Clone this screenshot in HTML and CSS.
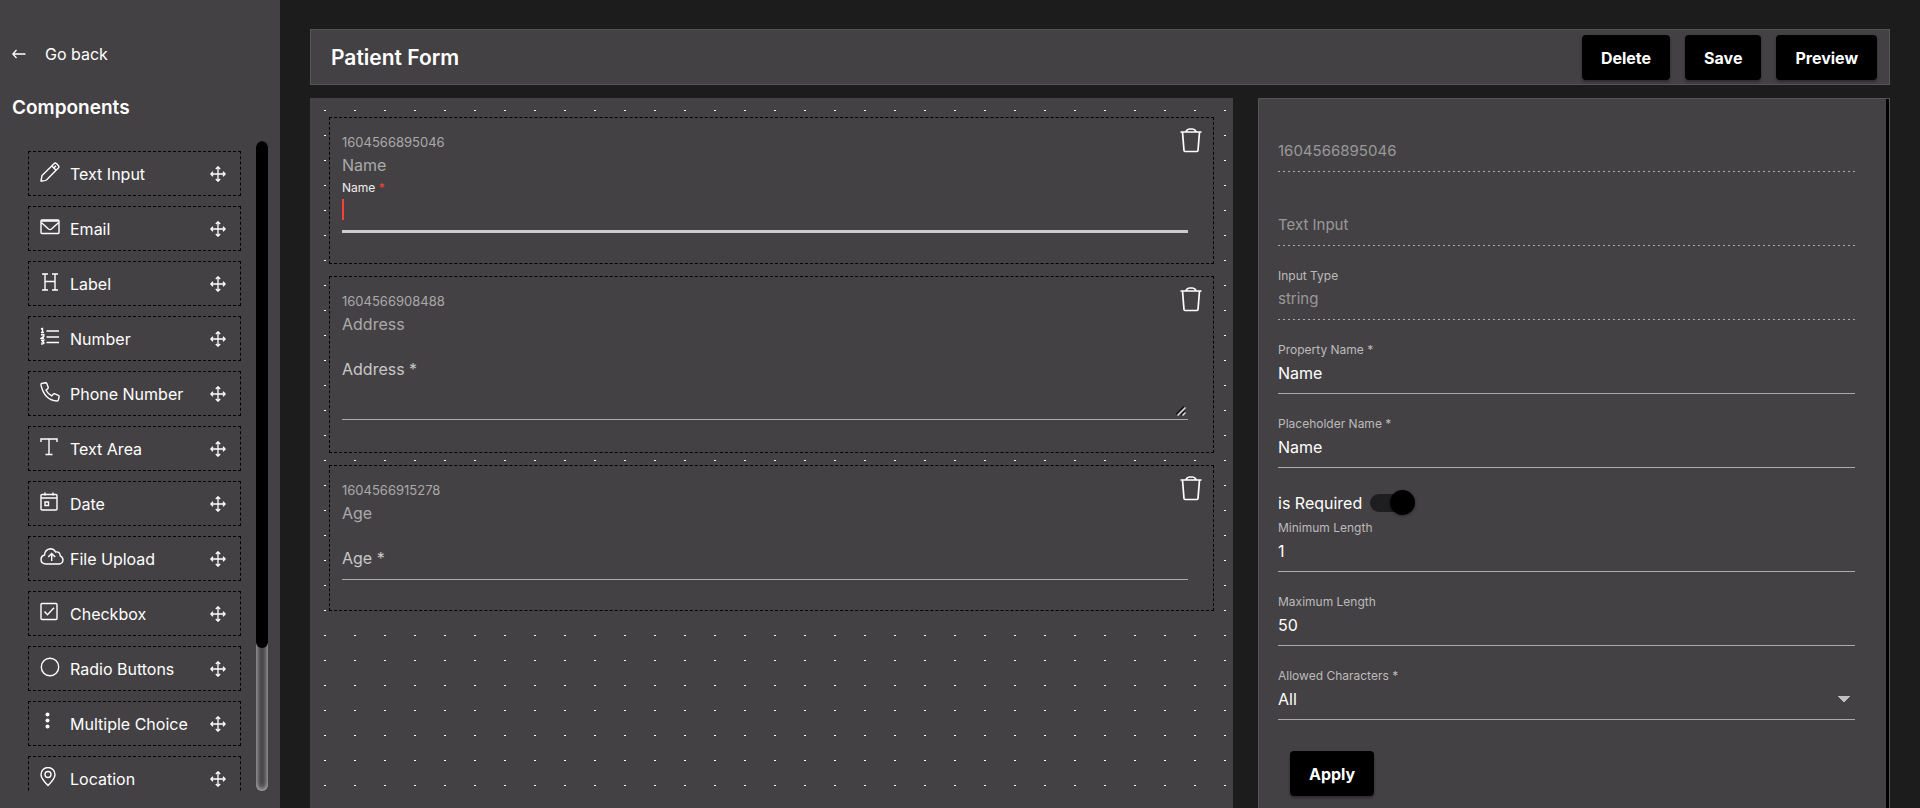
FILE: index.html
```html
<!DOCTYPE html>
<html lang="en">
<head>
<meta charset="utf-8">
<meta name="viewport" content="width=device-width, initial-scale=1">
<title>Patient Form</title>
<link rel="stylesheet" href="styles.css">
</head>
<body>
<svg class="sprite" aria-hidden="true">
  <symbol id="move" viewBox="0 0 16 16"><path d="M8 .8v14.4M.8 8h14.4M5.8 3 8 .8 10.200 3M5.800 13 8 15.200 10.200 13M3 5.800.8 8 3 10.200M13 5.800 15.200 8 13 10.200"/></symbol>
  <symbol id="trash" viewBox="0 0 22 26"><path d="M.5 5h21M6 4.500C7 2.500 8 2 9.500 2h3c1.500 0 2.500.5 3.500 2.500M2.500 5l1.500 18.500q.1 1 1 1h12q.9 0 1-1L19.500 5"/></symbol>
</svg>
<div class="app">
  <aside class="sidebar">
    <a class="back" href="#">
      <svg class="back-icon" viewBox="0 0 14 10"><path d="M13.500 5H1M4.500 1 .8 5l3.700 4"/></svg>
      Go back
    </a>
    <h2 class="sidebar-title">Components</h2>
    <div class="scroller">
      <ul class="components">
        <li class="component"><svg class="icon" viewBox="0 0 20 20"><path d="M1 19l1-5.500L14 1.700q1.200-1.200 2.600 0l1.700 1.700q1.200 1.300 0 2.600L6.500 18Q4 19.300 1 19zM11.800 4l4.300 4.300M13.300 6.500 16 3.700"/></svg><span>Text Input</span><svg class="move"><use href="#move"/></svg></li>
        <li class="component"><svg class="icon" viewBox="0 0 20 20"><rect x="1" y="3" width="18" height="13.500" rx="1"/><path d="M1.300 5.500 8.500 12q1.500 1.200 3 0l7.200-6.500M1.500 4h17"/></svg><span>Email</span><svg class="move"><use href="#move"/></svg></li>
        <li class="component"><svg class="icon" viewBox="0 0 20 20"><path d="M5 2v16M15 2v16M5 9.500h10M2 2h6M12 2h6M2 18h6M12 18h6"/></svg><span>Label</span><svg class="move"><use href="#move"/></svg></li>
        <li class="component"><svg class="icon" viewBox="0 0 20 20"><path d="M6.500 4H19M6.500 10H19M6.500 15.500H19M1 2l1.500-.5v4M1 5.500h3M1 7.800h2.800v1.500L1 11.300h3M1 13.300h2.800L2.500 15q1.500 0 1.500 1t-3 1"/></svg><span>Number</span><svg class="move"><use href="#move"/></svg></li>
        <li class="component"><svg class="icon" viewBox="0 0 20 20"><path d="M1.500 1.500 5.500.8q1 0 1.300.8L8.200 5.200q.1 1-.5 1.500L6 8.200q1.800 3.500 5.800 5.700l1.600-1.800q.6-.6 1.500-.3l3.500 1.500q.9.400.7 1.300l-.8 3.500q-.2.900-1.200.9Q4.500 18.500 1 3.200q-.2-1.400.5-1.700z"/></svg><span>Phone Number</span><svg class="move"><use href="#move"/></svg></li>
        <li class="component"><svg class="icon" viewBox="0 0 20 20"><path d="M1 5V2h16v3M9 2v15.500M5.500 17.500h7"/></svg><span>Text Area</span><svg class="move"><use href="#move"/></svg></li>
        <li class="component"><svg class="icon" viewBox="0 0 20 20"><rect x="1" y="2.500" width="16" height="15.500" rx="1"/><path d="M1 6h16M5 .5v3M13 .5v3M5 10h3.500v3.500H5z"/></svg><span>Date</span><svg class="move"><use href="#move"/></svg></li>
        <li class="component"><svg class="icon icon-wide" viewBox="0 0 24 20"><path d="M6 17q-5-.3-5-4.500Q1 9 4.500 8q.5-5.800 6-6.300 3.500 0 5 3.300 4.500-.7 4.700 3.800Q23 10 23 13q-.3 3.700-4 4zM11.700 14V6.500M8.200 10l3.500-3.500 3.500 3.500"/></svg><span>File Upload</span><svg class="move"><use href="#move"/></svg></li>
        <li class="component"><svg class="icon" viewBox="0 0 20 20"><rect x="1" y="1.500" width="16" height="16" rx="1"/><path d="m4.500 9.500 3 3.300 6.500-7"/></svg><span>Checkbox</span><svg class="move"><use href="#move"/></svg></li>
        <li class="component"><svg class="icon" viewBox="0 0 20 20"><circle cx="10" cy="10" r="8.700"/></svg><span>Radio Buttons</span><svg class="move"><use href="#move"/></svg></li>
        <li class="component"><svg class="icon icon-dots" viewBox="0 0 20 20"><circle cx="7.500" cy="2.500" r="2"/><circle cx="7.500" cy="8.500" r="2"/><circle cx="7.500" cy="14.500" r="2"/></svg><span>Multiple Choice</span><svg class="move"><use href="#move"/></svg></li>
        <li class="component"><svg class="icon" viewBox="0 0 20 20"><path d="M8 18.500Q1 11.500 1 7.500a7 7 0 0 1 14 0q0 4-7 11z"/><circle cx="8" cy="7.500" r="3"/></svg><span>Location</span><svg class="move"><use href="#move"/></svg></li>
      </ul>
      <div class="track"><div class="thumb"></div></div>
    </div>
  </aside>

  <main class="main">
    <header class="topbar">
      <h1 class="title">Patient Form</h1>
      <div class="actions">
        <button class="btn" type="button">Delete</button>
        <button class="btn" type="button">Save</button>
        <button class="btn" type="button">Preview</button>
      </div>
    </header>

    <div class="workspace">
      <section class="canvas">
        <article class="card">
          <div class="card-id">1604566895046</div>
          <div class="card-name">Name</div>
          <label class="card-label" for="f-name">Name <span class="star">*</span></label>
          <div class="active-box"><input class="card-input active" id="f-name" type="text"><span class="cursor"></span></div>
          <button class="trash" type="button" aria-label="Remove Name"><svg><use href="#trash"/></svg></button>
        </article>
        <article class="card card-tall">
          <div class="card-id">1604566908488</div>
          <div class="card-name">Address</div>
          <label class="card-label" for="f-address"></label>
          <div class="area-box">
            <textarea class="card-input card-area" id="f-address" placeholder="Address *"></textarea>
            <svg class="grip" viewBox="0 0 10 10"><path class="grip-dark" d="M0 8.500 8 .5M5 9 9 5"/><path class="grip-light" d="M1.500 9.500 9.500 1.500M6.500 9.500l3-3"/></svg>
          </div>
          <button class="trash" type="button" aria-label="Remove Address"><svg><use href="#trash"/></svg></button>
        </article>
        <article class="card">
          <div class="card-id">1604566915278</div>
          <div class="card-name">Age</div>
          <label class="card-label" for="f-age"></label>
          <input class="card-input" id="f-age" type="text" placeholder="Age *">
          <button class="trash" type="button" aria-label="Remove Age"><svg><use href="#trash"/></svg></button>
        </article>
      </section>

      <section class="settings">
        <form class="form">
          <div class="field"><label class="label" for="s-id"></label><input class="value" id="s-id" value="1604566895046" disabled></div>
          <div class="field"><label class="label" for="s-kind"></label><input class="value" id="s-kind" value="Text Input" disabled></div>
          <div class="field"><label class="label" for="s-type">Input Type</label><input class="value" id="s-type" value="string" disabled></div>
          <div class="field"><label class="label" for="s-prop">Property Name *</label><input class="value" id="s-prop" value="Name"></div>
          <div class="field"><label class="label" for="s-place">Placeholder Name *</label><input class="value" id="s-place" value="Name"></div>
          <div class="field">
            <div class="switch-row"><label for="s-req">is Required</label><input class="switch" id="s-req" type="checkbox" checked></div>
            <label class="label" for="s-min">Minimum Length</label><input class="value" id="s-min" value="1">
          </div>
          <div class="field"><label class="label" for="s-max">Maximum Length</label><input class="value" id="s-max" value="50"></div>
          <div class="field"><label class="label" for="s-chars">Allowed Characters *</label><select class="value select" id="s-chars"><option>All</option></select></div>
          <button class="btn apply" type="button">Apply</button>
        </form>
        <div class="settings-bar"></div>
      </section>
    </div>
  </main>
</div>
</body>
</html>
```
FILE: styles.css
```css
* { box-sizing: border-box; }
body {
  margin: 0;
  background: #1c1c1c;
  color: #fff;
  font: 16px/24px Inter, "Liberation Sans", sans-serif;
}
button, input, select, textarea { font: inherit; color: inherit; }
svg { fill: none; stroke: currentColor; }
.sprite { display: none; }
.app { display: flex; height: 100vh; overflow: hidden; }

.sidebar {
  display: flex;
  flex-direction: column;
  flex: 0 0 280px;
  padding: 42px 12px 17px;
  background: #444144;
}
.back {
  display: flex;
  align-items: center;
  gap: 19px;
  color: #fff;
  text-decoration: none;
}
.back-icon { width: 14px; height: 10px; stroke-width: 1.300; }
.sidebar-title { margin: 30px 0 21px; font-size: 19px; line-height: 24px; font-weight: 600; }
.scroller { display: flex; flex: 1; min-height: 0; gap: 15px; }
.components {
  display: flex;
  flex: 1;
  flex-direction: column;
  gap: 10px;
  margin: 0;
  padding: 10px 0 0 16px;
  overflow: hidden;
  list-style: none;
}
.component {
  display: flex;
  flex: 0 0 45px;
  align-items: center;
  padding: 0 14px 0 11px;
  border: 1px dashed #000;
}
.component span { flex: 1; white-space: nowrap; }
.icon { width: 20px; height: 20px; margin: 0 10px 3px 0; stroke-width: 1.400; }
.icon-wide { width: 24px; margin-right: 6px; }
.icon-dots { fill: currentColor; stroke: none; }
.move { width: 16px; height: 16px; stroke-width: 1.300; }
.track {
  width: 12px;
  border-radius: 6px;
  background: #444144;
  box-shadow: inset 0 0 6px #ddd;
}
.thumb { height: 78%; border-radius: 6px; background: #000; }

.main {
  display: flex;
  flex: 1;
  flex-direction: column;
  gap: 13px;
  min-width: 0;
  padding: 29px 30px 0;
}
.topbar {
  display: flex;
  align-items: center;
  justify-content: space-between;
  padding: 5px 12px 4px 20px;
  border: 1px solid #555;
  background: #444144;
}
.title { margin: 0; font-size: 21px; line-height: 28px; font-weight: 600; }
.actions { display: flex; gap: 15px; }
.btn {
  height: 45px;
  padding: 0 19px;
  border: 0;
  border-radius: 4px;
  background: #000;
  box-shadow: 0 2px 3px rgba(0, 0, 0, .35);
  color: #fff;
  font-weight: 700;
}

.workspace { display: grid; flex: 1; grid-template-columns: 923fr 632fr; gap: 25px; min-height: 0; }
.canvas {
  display: flex;
  flex-direction: column;
  gap: 12px;
  padding: 19px;
  background: conic-gradient(at 2px 1px, transparent 270deg, #fff 0) 14px 12px / 30px 25px #444144;
}
.card {
  position: relative;
  display: flex;
  flex-direction: column;
  padding: 14px 25px 30px 12px;
  border: 1px dashed #000;
  background: #444144;
}
.card-tall { padding-bottom: 32px; }
.card-id { color: #aaa; font-size: 13px; line-height: 20px; }
.card-name { color: #aaa; line-height: 26px; }
.card-label { height: 20px; font-size: 12px; line-height: 20px; color: #eee; }
.star { color: #f44336; }
.card-input {
  width: 100%;
  height: 34px;
  padding: 0 0 9px;
  border: 0;
  border-bottom: 1px solid #aaa;
  border-radius: 0;
  outline: 0;
  background: transparent;
}
.card-input::placeholder { color: #c8c8c8; opacity: 1; }
.area-box { position: relative; display: flex; }
.card-area { height: 63px; resize: none; }
.grip { position: absolute; right: 2px; bottom: 4px; width: 10px; height: 10px; stroke-width: 1.500; }
.grip-dark { stroke: #111; }
.grip-light { stroke: #ddd; }
.active-box { position: relative; display: flex; }
.active { height: 35px; border-bottom: 3px solid #ccc; }
.cursor { position: absolute; top: 1px; left: 0; width: 2px; height: 21px; background: #f44336; }
.trash {
  position: absolute;
  top: 9px;
  right: 11px;
  display: flex;
  padding: 0;
  border: 0;
  background: none;
}
.trash svg { width: 22px; height: 26px; stroke-width: 1.700; }

.settings { display: flex; border: 1px solid #555; border-bottom: 0; background: #444144; overflow: hidden; }
.form { display: flex; flex: 1; flex-direction: column; align-items: stretch; gap: 20px; padding: 19px 31px 12px 19px; }
.settings-bar { width: 3px; background: #000; }
.field { display: flex; flex-direction: column; }
.label { height: 20px; color: #bbb; font-size: 12px; line-height: 20px; }
.value {
  width: 100%;
  height: 34px;
  padding: 0 0 8px;
  border: 0;
  border-bottom: 1px solid #aaa;
  border-radius: 0;
  background: transparent;
}
.value:disabled {
  padding-bottom: 9px;
  border-bottom: 0;
  background: repeating-linear-gradient(90deg, #aaa 0 2px, transparent 2px 5px) left bottom / 100% 1px no-repeat;
  color: #999;
  font-size: 15px;
}
.select {
  appearance: none;
  background: conic-gradient(from -45deg at 50% 100%, #c0c0c0 90deg, transparent 0) right 5px top 10px / 12px 6px no-repeat;
}
.switch-row { display: flex; align-items: center; gap: 8px; height: 30px; }
.switch {
  position: relative;
  appearance: none;
  width: 45px;
  height: 18px;
  margin: 0;
  border-radius: 9px;
  background: #1e1e20;
}
.switch::before {
  content: "";
  position: absolute;
  top: -4px;
  right: 0;
  width: 25px;
  height: 25px;
  border-radius: 50%;
  background: #000;
  box-shadow: 0 1px 3px rgba(0, 0, 0, .4);
}
.apply { align-self: flex-start; margin: 11px 0 0 12px; }
```
